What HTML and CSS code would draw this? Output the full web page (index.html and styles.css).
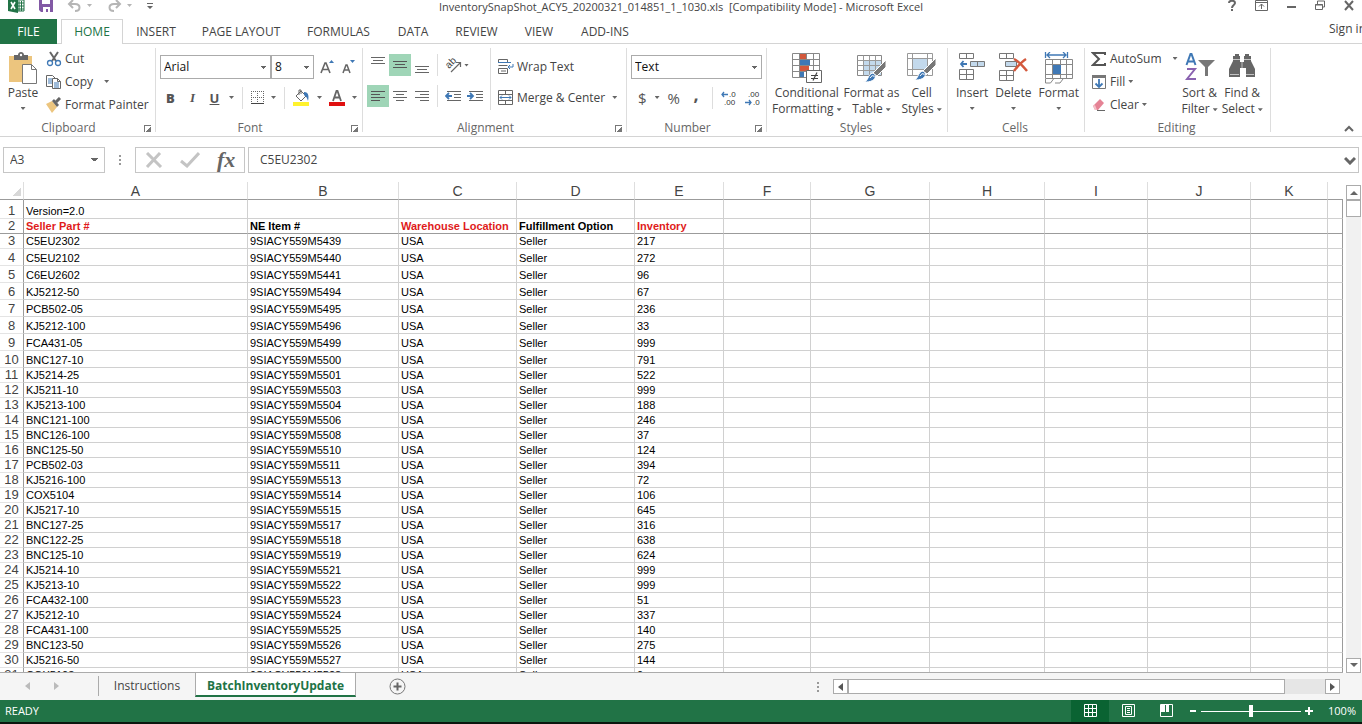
FILE: index.html
```html
<!DOCTYPE html>
<html lang="en">

<head>
    <meta charset="UTF-8">
    <meta name="viewport" content="width=device-width, initial-scale=1.0">
    <title>InventorySnapShot_ACY5_20200321_014851_1_1030.xls - Microsoft Excel</title>
    <link rel="stylesheet" href="styles.css">
</head>

<body>
    <!-- title bar -->
    <header class="titlebar">
        <div class="quick">
            <svg width="17" height="14" viewBox="0 0 17 14"><path d="M9 0h7v11H9z" fill="#fff" stroke="#217346"/><path d="M11 1v10M13.500 1v10M9 3h7M9 6h7M9 9h7" stroke="#217346"/><path d="M0 0h10v13L0 11z" fill="#217346"/><path d="M3 2l4 7M7 2L3 9" stroke="#fff" stroke-width="1.600"/></svg>
            <button class="plain" aria-label="Save"><svg width="14" height="13" viewBox="0 0 14 13"><path d="M0 0h14v12H2l-2-2z" fill="#8259a5"/><path d="M3 0h8v4H3zM4 7h7v5H9V9H7v3H4z" fill="#fff"/></svg></button>
            <button class="plain" aria-label="Undo"><svg width="26" height="13" viewBox="0 0 26 13"><path d="M6 0L2 4l4 4M2 4h6c6 0 6 7 0 7" fill="none" stroke="#b5b5b5" stroke-width="2"/><path d="M20 4h5l-2.500 3z" fill="#b5b5b5"/></svg></button>
            <button class="plain" aria-label="Redo"><svg width="26" height="13" viewBox="0 0 26 13"><path d="M9 0l4 4-4 4M13 4H7C1 4 1 11 7 11" fill="none" stroke="#b5b5b5" stroke-width="2"/><path d="M20 4h5l-2.500 3z" fill="#b5b5b5"/></svg></button>
            <button class="plain" aria-label="Customize toolbar"><svg width="6" height="13" viewBox="0 0 6 13"><path d="M0 3h6v1H0zM0 6h6L3 9z" fill="#666"/></svg></button>
        </div>
        <div class="title">InventorySnapShot_ACY5_20200321_014851_1_1030.xls &nbsp;[Compatibility Mode] - Microsoft Excel</div>
        <div class="window-buttons">
            <button class="plain" aria-label="Help"><svg width="8" height="12" viewBox="0 0 8 12"><path d="M1 3c0-3 6-3 6 0 0 2-3 2-3 5M4 9v2" fill="none" stroke="#666" stroke-width="2"/></svg></button>
            <button class="plain" aria-label="Ribbon options"><svg width="13" height="12" viewBox="0 0 13 12"><path d="M.5.5h12v10H.5zM.5 2.500h12M6.500 9V4M4 6.500L6.500 4 9 6.500" fill="none" stroke="#666"/></svg></button>
            <button class="plain" aria-label="Minimize"><svg width="9" height="12" viewBox="0 0 9 12"><path d="M0 6h9v2H0z" fill="#666"/></svg></button>
            <button class="plain" aria-label="Restore"><svg width="10" height="12" viewBox="0 0 10 12"><path d="M.5 4.500h7v5h-7zM2.500 4V1h7v6h-2M0 5h8" fill="none" stroke="#666"/></svg></button>
            <button class="plain" aria-label="Close"><svg width="10" height="12" viewBox="0 0 10 12"><path d="M1 1l8 9M9 1l-8 9" stroke="#666" stroke-width="2"/></svg></button>
        </div>
    </header>

    <!-- tabs -->
    <nav class="tabs">
        <a href="#" class="tab file">FILE</a>
        <a href="#" class="tab active">HOME</a>
        <a href="#" class="tab insert">INSERT</a>
        <a href="#" class="tab layout">PAGE LAYOUT</a>
        <a href="#" class="tab formulas">FORMULAS</a>
        <a href="#" class="tab data">DATA</a>
        <a href="#" class="tab review">REVIEW</a>
        <a href="#" class="tab view">VIEW</a>
        <a href="#" class="tab addins">ADD-INS</a>
        <a href="#" class="signin">Sign in</a>
    </nav>

    <!-- ribbon -->
    <section class="ribbon">
        <div class="group clipboard">
            <div class="tools">
                <button class="big paste">
                    <svg width="30" height="32" viewBox="0 0 30 32"><path d="M1 4h23v26H1z" fill="#ecc57e"/><path d="M6 3h4c0-4 6-4 6 0h4v5H6z" fill="#666"/><circle cx="13" cy="3" r="1.200" fill="#fff"/><path d="M14.500 12.500h9l5 5v14h-14z" fill="#fff" stroke="#777"/><path d="M23.500 12.500v5h5" fill="none" stroke="#777"/></svg>
                    <span>Paste</span><i class="arrow"></i>
                </button>
                <div class="stack">
                    <button class="item"><svg width="16" height="16" viewBox="0 0 16 16"><path d="M4 1l6 9M12 1L6 10" stroke="#666" stroke-width="2"/><circle cx="4" cy="12" r="2.500" fill="#fff" stroke="#3f78b5" stroke-width="1.300"/><circle cx="12" cy="12" r="2.500" fill="#fff" stroke="#3f78b5" stroke-width="1.300"/></svg>Cut</button>
                    <button class="item"><svg width="16" height="16" viewBox="0 0 16 16"><path d="M.5 1.500h6l3 3v8h-9z" fill="#fff" stroke="#666"/><path d="M2 5h4M2 7h4M2 9h4" stroke="#3f78b5"/><path d="M6.500 4.500h5l3 3v7h-8z" fill="#fff" stroke="#666"/><path d="M11.500 4.500v3h3" fill="none" stroke="#666"/><path d="M8 9h5M8 11h5M8 13h5" stroke="#3f78b5"/></svg>Copy<i class="arrow far"></i></button>
                    <button class="item"><svg width="16" height="16" viewBox="0 0 16 16"><path d="M0 7l6-3 5 6-5 6z" fill="#ecc57e"/><path d="M6 4l2-2 5 6-2 2z" fill="#666"/><path d="M10 5l4-4" stroke="#666" stroke-width="3"/></svg>Format Painter</button>
                </div>
            </div>
            <div class="caption">Clipboard<i class="launch"></i></div>
        </div>

        <div class="group font">
            <div class="line">
                <select class="font-name" aria-label="Font"><option>Arial</option></select><select class="font-size" aria-label="Font size"><option>8</option></select>
                <button class="plain grow" aria-label="Increase font size"><svg width="14" height="16" viewBox="0 0 14 16"><path d="M1 14L5 4h1l4 10M2.500 10.500h6" fill="none" stroke="#666" stroke-width="1.600"/><path d="M9 4l2.500-3L14 4z" fill="#3f78b5"/></svg></button>
                <button class="plain" aria-label="Decrease font size"><svg width="14" height="16" viewBox="0 0 14 16"><path d="M1 14L4 6h1l3 8M2 11h5" fill="none" stroke="#666" stroke-width="1.500"/><path d="M8 1h5l-2.500 3z" fill="#3f78b5"/></svg></button>
            </div>
            <div class="line marks">
                <button class="mark"><b>B</b></button>
                <button class="mark italic">I</button>
                <button class="mark under">U</button><i class="arrow"></i>
                <span class="divider"></span>
                <button class="plain" aria-label="Borders"><svg width="13" height="13" viewBox="0 0 13 13"><path d="M.5 0v12M6.500 0v12M12.500 0v12M0 .5h13M0 6.500h13" stroke="#666" stroke-dasharray="1 1"/><path d="M0 12.500h13" stroke="#444"/></svg></button><i class="arrow"></i>
                <span class="divider"></span>
                <button class="plain" aria-label="Fill color"><svg width="17" height="17" viewBox="0 0 17 17"><path d="M3 7l5-5 5 5-5 5z" fill="#fff" stroke="#666"/><path d="M6 6V1h2v4" fill="none" stroke="#666"/><path d="M11 3c5 0 5 5 4 9-1-4-2-4-4-6z" fill="#3f78b5"/><path d="M0 13h16v4H0z" fill="#fff22d"/></svg></button><i class="arrow"></i>
                <button class="plain" aria-label="Font color"><svg width="16" height="17" viewBox="0 0 16 17"><path d="M4 12L7.500 2h1L12 12M5.500 8.500h5" fill="none" stroke="#666" stroke-width="1.800"/><path d="M0 13h16v4H0z" fill="#e01010"/></svg></button><i class="arrow"></i>
            </div>
            <div class="caption">Font<i class="launch"></i></div>
        </div>

        <div class="group alignment">
            <div class="tools">
                <div class="aligns">
                    <button class="sq" aria-label="Top align"><svg width="14" height="22" viewBox="0 0 14 22"><path d="M0 3.500h14M2 6.500h10M0 9.500h14" stroke="#666"/></svg></button>
                    <button class="sq on" aria-label="Middle align"><svg width="14" height="22" viewBox="0 0 14 22"><path d="M0 7.500h14M2 10.500h10M0 13.500h14" stroke="#555"/></svg></button>
                    <button class="sq" aria-label="Bottom align"><svg width="14" height="22" viewBox="0 0 14 22"><path d="M0 12.500h14M2 15.500h10M0 18.500h14" stroke="#666"/></svg></button>
                    <span class="divider"></span>
                    <button class="plain" aria-label="Orientation"><svg width="20" height="20" viewBox="0 0 20 20"><text font-size="10" transform="translate(6 14) rotate(-45)" fill="#444">ab</text><path d="M8 17l9-9M13 7.500h4.500V12" fill="none" stroke="#666" stroke-width="1.200"/></svg></button><i class="arrow"></i>
                    <button class="sq on" aria-label="Align left"><svg width="14" height="22" viewBox="0 0 14 22"><path d="M0 6.500h14M0 9.500h9M0 12.500h14M0 15.500h9" stroke="#555"/></svg></button>
                    <button class="sq" aria-label="Center"><svg width="14" height="22" viewBox="0 0 14 22"><path d="M0 6.500h14M3 9.500h8M0 12.500h14M3 15.500h8" stroke="#666"/></svg></button>
                    <button class="sq" aria-label="Align right"><svg width="14" height="22" viewBox="0 0 14 22"><path d="M0 6.500h14M5 9.500h9M0 12.500h14M5 15.500h9" stroke="#666"/></svg></button>
                    <span class="divider"></span>
                    <button class="plain" aria-label="Decrease indent"><svg width="16" height="12" viewBox="0 0 16 12"><path d="M2 1.500h14M9 4.500h7M9 7.500h7M2 10.500h14" stroke="#666"/><path d="M7 6H1M4 3L1 6l3 3" fill="none" stroke="#3f78b5" stroke-width="1.800"/></svg></button>
                    <button class="plain" aria-label="Increase indent"><svg width="16" height="12" viewBox="0 0 16 12"><path d="M2 1.500h14M9 4.500h7M9 7.500h7M2 10.500h14" stroke="#666"/><path d="M0 6h6M3 3l3 3-3 3" fill="none" stroke="#3f78b5" stroke-width="1.800"/></svg></button>
                </div>
                <div class="wraps">
                    <button class="item"><svg width="16" height="16" viewBox="0 0 16 16"><path d="M.5.5h9v3h-9zM.5 9.500h9v5h-9zM.5 6.500h9M3 12h5" fill="none" stroke="#666"/><path d="M0 3.500h13M15 5v3H10M12 6l-2 2 2 2" fill="none" stroke="#3f78b5"/></svg>Wrap Text</button>
                    <button class="item"><svg width="16" height="16" viewBox="0 0 16 16"><path d="M.5.5h14v14H.5zM.5 4.500h14M.5 10.500h14M7.500.5v4M7.500 10.500v4" fill="none" stroke="#666"/><path d="M2 7.500h11M4 5.500l-2 2 2 2M11 5.500l2 2-2 2" fill="none" stroke="#3f78b5"/></svg>Merge &amp; Center<i class="arrow wide"></i></button>
                </div>
            </div>
            <div class="caption">Alignment<i class="launch"></i></div>
        </div>

        <div class="group number">
            <div class="line"><select class="format" aria-label="Number format"><option>Text</option></select></div>
            <div class="line signs">
                <button class="sign">$</button><i class="arrow"></i>
                <button class="sign">%</button>
                <button class="sign comma">,</button>
                <span class="divider"></span>
                <button class="plain" aria-label="Increase decimal"><svg width="16" height="18" viewBox="0 0 16 18"><path d="M7 5.500H1M3 3L1 5.500 3 8" fill="none" stroke="#3f78b5" stroke-width="1.300"/><text x="8" y="8" font-size="8" fill="#333">.0</text><text x="3" y="16" font-size="8" fill="#333">.00</text></svg></button>
                <button class="plain" aria-label="Decrease decimal"><svg width="16" height="18" viewBox="0 0 16 18"><path d="M0 13.500h6M4 11l2 2.500L4 16" fill="none" stroke="#3f78b5" stroke-width="1.300"/><text x="3" y="8" font-size="8" fill="#333">.00</text><text x="8" y="16" font-size="8" fill="#333">.0</text></svg></button>
            </div>
            <div class="caption">Number<i class="launch"></i></div>
        </div>

        <div class="group styles">
            <div class="tools">
                <button class="big">
                    <svg width="32" height="32" viewBox="0 0 32 32"><path d="M1.500 1.500h27v24h-27zM1.500 7.500h27M1.500 13.500h27M1.500 19.500h27M8.500 1.500v24M15.500 1.500v24M22.500 1.500v24" fill="#fff" stroke="#888"/><path d="M9 2h6v5H9zM9 14h9v5H9z" fill="#d3583c"/><path d="M9 8h10v5H9zM9 20h4v5H9z" fill="#3f78b5"/><path d="M15.500 18.500h15v12h-15z" fill="#fff" stroke="#666"/><path d="M20 23.500h7M20 26.500h7M26 20.500l-4 8" stroke="#444" stroke-width="1.200"/></svg>
                    <span>Conditional</span><span>Formatting<i class="arrow in"></i></span>
                </button>
                <button class="big">
                    <svg width="32" height="32" viewBox="0 0 32 32"><path d="M1.500 3.500h24v20h-24z" fill="#fff" stroke="#888"/><path d="M8 9h17v14H8z" fill="#c3d9ec"/><path d="M1.500 8.500h24M1.500 13.500h24M1.500 18.500h24M7.500 3.500v20M13.500 3.500v20M19.500 3.500v20" stroke="#999"/><path d="M30 8v7l-9 9-4-3z" fill="#777" stroke="#fff"/><path d="M7 30c6 0 4-8 10-9 5 3 2 10-10 9z" fill="#3f78b5" stroke="#fff"/><path d="M14 26c2-3 4-3 4-1" fill="none" stroke="#fff"/></svg>
                    <span>Format as</span><span>Table<i class="arrow in"></i></span>
                </button>
                <button class="big">
                    <svg width="32" height="32" viewBox="0 0 32 32"><path d="M1.500 1.500h25v22h-25zM1.500 6.500h25M1.500 17.500h25M6.500 1.500v22M21.500 1.500v22" fill="#fff" stroke="#999"/><path d="M7 7h14v10H7z" fill="#c3d9ec"/><path d="M30 6v7l-9 9-4-3z" fill="#777" stroke="#fff"/><path d="M7 28c6 0 4-8 10-9 5 3 2 10-10 9z" fill="#3f78b5" stroke="#fff"/><path d="M14 24c2-3 4-3 4-1" fill="none" stroke="#fff"/></svg>
                    <span>Cell</span><span>Styles<i class="arrow in"></i></span>
                </button>
            </div>
            <div class="caption">Styles</div>
        </div>

        <div class="group cells">
            <div class="tools">
                <button class="big">
                    <svg width="28" height="32" viewBox="0 0 28 32"><path d="M1.500 1.500h14v5h-14zM8.500 1.500v5M1.500 17.500h14v10h-14zM1.500 22.500h14M8.500 17.500v10" fill="#fff" stroke="#777"/><path d="M12.500 9.500h14v5h-14zM19.500 9.500v5" fill="#c3d9ec" stroke="#777"/><path d="M9 12H3M5.500 9L3 12l2.500 3" fill="none" stroke="#3f78b5" stroke-width="1.800"/></svg>
                    <span>Insert</span><i class="arrow"></i>
                </button>
                <button class="big">
                    <svg width="30" height="32" viewBox="0 0 30 32"><path d="M1.500 1.500h14v5h-14zM8.500 1.500v5M1.500 18.500h14v10h-14zM1.500 23.500h14M8.500 18.500v10" fill="#fff" stroke="#777"/><path d="M7.500 9.500h11v5h-11z" fill="#c3d9ec" stroke="#777"/><path d="M16 7c4 2 9 7 13 12M28 7c-5 3-8 7-12 12" fill="none" stroke="#d3583c" stroke-width="2.500"/></svg>
                    <span>Delete</span><i class="arrow"></i>
                </button>
                <button class="big">
                    <svg width="30" height="32" viewBox="0 0 30 32"><path d="M1.500 0v6M23.500 0v6M3 3h19M6 0L3 3l3 3M19 0l3 3-3 3" fill="none" stroke="#3f78b5" stroke-width="1.300"/><path d="M1.500 7.500h27v19h-27zM1.500 12.500h27M1.500 22.500h27M8.500 7.500v19M16.500 7.500v19M22.500 7.500v19" fill="#fff" stroke="#888"/><path d="M9 13h8v9H9z" fill="#3f78b5"/><path d="M1.500 27v4h5l3-4M11 31h5l3-4" fill="none" stroke="#888"/></svg>
                    <span>Format</span><i class="arrow"></i>
                </button>
            </div>
            <div class="caption">Cells</div>
        </div>

        <div class="group editing">
            <div class="tools">
                <div class="stack">
                    <button class="item"><svg width="16" height="16" viewBox="0 0 16 16"><path d="M14 4V2H2l6 6-6 6h12v-2" fill="none" stroke="#555" stroke-width="2"/></svg>AutoSum<i class="arrow far"></i></button>
                    <button class="item"><svg width="16" height="16" viewBox="0 0 16 16"><path d="M1.500 1.500h13v13h-13z" fill="#fff" stroke="#777"/><path d="M1 1h14v3H1z" fill="#777"/><path d="M8 5v8M4.500 9.500L8 13l3.500-3.500" fill="none" stroke="#3f78b5" stroke-width="1.800"/></svg>Fill<i class="arrow"></i></button>
                    <button class="item"><svg width="16" height="16" viewBox="0 0 16 16"><path d="M2 9l7-7 4 4-6 7H4z" fill="#e58395"/><path d="M2 9l2 4h2L4 8z" fill="#f5c1c9"/><path d="M6 13.500h8" stroke="#666"/></svg>Clear<i class="arrow"></i></button>
                </div>
                <button class="big sort">
                    <svg width="30" height="32" viewBox="0 0 30 32"><path d="M1.500 13L5.500 2h1l4 11M3 9.500h6.500" fill="none" stroke="#3f78b5" stroke-width="2"/><path d="M2 17h8L2 27h9" fill="none" stroke="#8a62b0" stroke-width="2"/><path d="M13 8h17l-7 7v9h-3v-9z" fill="#777"/></svg>
                    <span>Sort &amp;</span><span>Filter<i class="arrow in"></i></span>
                </button>
                <button class="big find">
                    <svg width="28" height="32" viewBox="0 0 28 32"><path d="M5 4h2V2h4v2h1v6h4V4h1V2h4v2h2v5l4 8v8h-9v-9h-6v9H1v-8l4-8z" fill="#666"/><path d="M5 7.500h7M16 7.500h7M2 22.500h9M17 22.500h9M14 10v7" stroke="#fff" opacity=".6"/></svg>
                    <span>Find &amp;</span><span>Select<i class="arrow in"></i></span>
                </button>
            </div>
            <div class="caption">Editing</div>
        </div>
        <button class="plain collapse" aria-label="Collapse ribbon"><svg width="10" height="7" viewBox="0 0 10 7"><path d="M1 6l4-4 4 4" fill="none" stroke="#666" stroke-width="2"/></svg></button>
    </section>

    <!-- formula bar -->
    <section class="formula-bar">
        <select class="name-box" aria-label="Name box"><option>A3</option></select>
        <span class="dots"></span>
        <div class="fx">
            <button class="plain" aria-label="Cancel"><svg width="18" height="16" viewBox="0 0 18 16"><path d="M2 1l14 14M15 1L2 15" stroke="#c4c4c4" stroke-width="3"/></svg></button>
            <button class="plain" aria-label="Enter"><svg width="20" height="16" viewBox="0 0 20 16"><path d="M1 9l6 5L19 1" fill="none" stroke="#c4c4c4" stroke-width="3"/></svg></button>
            <button class="plain fx-button">fx</button>
        </div>
        <div class="formula">
            <input type="text" value="C5EU2302" aria-label="Formula">
            <svg width="12" height="9" viewBox="0 0 12 9"><path d="M1 2l5 5 5-5" fill="none" stroke="#666" stroke-width="3"/></svg>
        </div>
    </section>

    <!-- sheet -->
    <main class="sheet">
        <div class="grid">
            <table>
                <colgroup>
                    <col class="c-num"><col class="c-a"><col class="c-b"><col class="c-c"><col class="c-c"><col class="c-e"><col class="c-f"><col class="c-g"><col class="c-h"><col class="c-i"><col class="c-i"><col class="c-k"><col>
                </colgroup>
                <thead>
                    <tr><th class="corner"></th><th>A</th><th>B</th><th>C</th><th>D</th><th>E</th><th>F</th><th>G</th><th>H</th><th>I</th><th>J</th><th>K</th><th></th></tr>
                </thead>
                <tbody id="rows"></tbody>
            </table>
        </div>
        <div class="vscroll">
            <button aria-label="Scroll up"><svg width="8" height="5" viewBox="0 0 8 5"><path d="M0 5l4-4 4 4z" fill="#666"/></svg></button>
            <span class="thumb"></span>
            <button class="down" aria-label="Scroll down"><svg width="8" height="5" viewBox="0 0 8 5"><path d="M0 0l4 4 4-4z" fill="#666"/></svg></button>
        </div>
    </main>

    <!-- sheet tabs -->
    <section class="sheet-tabs">
        <div class="moves">
            <button class="plain" aria-label="Previous sheet"><svg width="5" height="8" viewBox="0 0 5 8"><path d="M5 0v8L0 4z" fill="#bbb"/></svg></button>
            <button class="plain" aria-label="Next sheet"><svg width="5" height="8" viewBox="0 0 5 8"><path d="M0 0v8l5-4z" fill="#bbb"/></svg></button>
        </div>
        <a href="#" class="sheet-tab">Instructions</a>
        <a href="#" class="sheet-tab current">BatchInventoryUpdate</a>
        <button class="plain add" aria-label="New sheet"><svg width="17" height="17" viewBox="0 0 17 17"><circle cx="8.500" cy="8.500" r="7.500" fill="none" stroke="#777"/><path d="M8.500 4.500v8M4.500 8.500h8" stroke="#666" stroke-width="2"/></svg></button>
        <span class="dots"></span>
        <div class="hscroll">
            <button aria-label="Scroll left"><svg width="5" height="8" viewBox="0 0 5 8"><path d="M5 0v8L0 4z" fill="#555"/></svg></button>
            <span class="thumb"></span>
            <button class="right" aria-label="Scroll right"><svg width="5" height="8" viewBox="0 0 5 8"><path d="M0 0v8l5-4z" fill="#555"/></svg></button>
        </div>
    </section>

    <!-- status bar -->
    <footer class="status">
        <span class="ready">READY</span>
        <button class="view-button on" aria-label="Normal"><svg width="13" height="14" viewBox="0 0 13 14"><path d="M.5.5h12v12H.5zM.5 4.500h12M.5 8.500h12M4.500.5v12M8.500.5v12" fill="none" stroke="#fff"/></svg></button>
        <button class="view-button" aria-label="Page layout"><svg width="13" height="14" viewBox="0 0 13 14"><path d="M.5.5h12v12H.5zM3.500 2.500h6v8h-6zM5 4.500h3M5 6.500h3M5 8.500h3" fill="none" stroke="#fff"/></svg></button>
        <button class="view-button" aria-label="Page break"><svg width="13" height="14" viewBox="0 0 13 14"><path d="M.5.5h12v12H.5z" fill="none" stroke="#fff"/><path d="M1 1h4v7H1zM6 1h3v7H6z" fill="#fff"/></svg></button>
        <button class="zoom-button" aria-label="Zoom out"><svg width="8" height="8" viewBox="0 0 8 8"><path d="M1 3h6v2H1z" fill="#fff"/></svg></button>
        <input type="range" class="zoom" min="0" max="200" value="100" aria-label="Zoom">
        <button class="zoom-button" aria-label="Zoom in"><svg width="8" height="8" viewBox="0 0 8 8"><path d="M0 3h8v2H0zM3 0h2v8H3z" fill="#fff"/></svg></button>
        <span class="percent">100%</span>
    </footer>

    <script src="script.js"></script>
</body>

</html>
```
FILE: styles.css
```css
* {
    margin: 0;
    padding: 0;
    box-sizing: border-box;
}

body {
    height: 100vh;
    display: flex;
    flex-direction: column;
    overflow: hidden;
    background-color: #ffffff;
    border-bottom: 2px solid #0a160e;
    font-family: "Open Sans", "Noto Sans", sans-serif;
    font-size: 12px;
    line-height: 16px;
    color: #444;
}

button,
select,
input {
    font: inherit;
    color: inherit;
    background: none;
    border: none;
    border-radius: 0;
}

a {
    color: inherit;
    text-decoration: none;
}

svg {
    display: block;
    flex: none;
}

svg text {
    font-family: "Liberation Sans", sans-serif;
}

.plain {
    display: flex;
    flex: none;
}

/* Title bar */
.titlebar {
    height: 19px;
    display: grid;
    grid-template-columns: 1fr auto 1fr;
    align-items: start;
}

.quick {
    display: flex;
    gap: 14px;
    padding-left: 8px;
}

.title {
    font-size: 11px;
    line-height: 14px;
    white-space: pre;
}

.window-buttons {
    display: flex;
    justify-content: flex-end;
    gap: 19px;
    padding-right: 8px;
}

/* Ribbon tabs */
.tabs {
    height: 25px;
    display: flex;
    border-bottom: 1px solid #d4d4d4;
}

.tab {
    height: 25px;
    line-height: 25px;
    text-align: center;
}

.file {
    width: 57px;
    background-color: #217346;
    color: #ffffff;
    margin-right: 4px;
}

.active {
    width: 62px;
    background-color: #ffffff;
    border: 1px solid #d4d4d4;
    border-bottom: none;
    line-height: 24px;
    color: #217346;
}

.insert { width: 66px; }
.layout { width: 104px; }
.formulas { width: 91px; }
.data { width: 58px; }
.review { width: 69px; }
.view { width: 56px; }
.addins { width: 76px; }

.signin {
    margin-left: auto;
    margin-right: -4px;
    line-height: 20px;
    white-space: nowrap;
}

/* Ribbon */
.ribbon {
    height: 93px;
    display: flex;
    padding-top: 4px;
    border-bottom: 1px solid #d4d4d4;
}

.group {
    height: 84px;
    display: flex;
    flex-direction: column;
    flex: none;
    border-right: 1px solid #dddddd;
}

.clipboard { width: 156px; }
.font { width: 207px; }
.alignment { width: 264px; }
.number { width: 140px; }
.styles { width: 181px; }
.cells { width: 137px; }
.editing { width: 186px; }

.caption {
    position: relative;
    margin-top: auto;
    text-align: center;
    padding-right: 18px;
    line-height: 8px;
    color: #666;
}

.styles .caption,
.cells .caption,
.editing .caption {
    padding-right: 2px;
}

.launch {
    position: absolute;
    right: 4px;
    top: 1px;
    width: 7px;
    height: 7px;
    border-left: 1px solid #777;
    border-top: 1px solid #777;
    background: linear-gradient(135deg, transparent 55%, #777 55%);
}

.arrow {
    flex: none;
    display: inline-block;
    width: 5px;
    height: 3px;
    background-color: #666;
    clip-path: polygon(0 0, 100% 0, 50% 100%);
}

.arrow.far { margin-left: 8px; }
.arrow.wide { margin-left: 4px; }

.arrow.in {
    margin-left: 3px;
    vertical-align: middle;
}

.tools {
    height: 76px;
    display: flex;
    align-items: flex-start;
}

.big {
    display: flex;
    flex-direction: column;
    align-items: center;
    padding-top: 4px;
    white-space: nowrap;
}

.big .arrow:not(.in) {
    margin-top: 6px;
}

.big svg {
    margin-bottom: 1px;
}

.paste {
    width: 46px;
}

.stack {
    display: flex;
    flex-direction: column;
}

.item {
    height: 23px;
    display: flex;
    align-items: center;
    gap: 3px;
    padding-bottom: 2px;
    white-space: nowrap;
}

.line {
    height: 31px;
    display: flex;
    align-items: center;
    padding: 6px 0 0 4px;
}

.line select {
    height: 24px;
    border: 1px solid #ababab;
    padding: 0 3px;
    color: #111;
    appearance: none;
}

select {
    background-image: linear-gradient(#666, #666), linear-gradient(#666, #666), linear-gradient(#666, #666);
    background-size: 5px 1px, 3px 1px, 1px 1px;
    background-position: right 4px top 10px, right 5px top 11px, right 6px top 12px;
    background-repeat: no-repeat;
}

.font-name { width: 111px; }
.font-size { width: 43px; }
.format { width: 131px; }

.grow {
    margin: 0 8px 0 6px;
}

.line.marks {
    gap: 7px;
    padding-left: 7px;
}

.mark {
    flex: none;
    width: 15px;
    font-size: 13px;
    font-weight: 700;
    color: #555;
}

.italic {
    font-family: "Liberation Serif", serif;
    font-style: italic;
}

.under {
    text-decoration: underline;
}

.divider {
    flex: none;
    width: 1px;
    height: 22px;
    background-color: #dddddd;
}

.marks .divider {
    margin: 0 1px;
}

.aligns {
    width: 127px;
    display: grid;
    grid-template-columns: 22px 22px 22px 9px 22px 22px;
    align-items: center;
    row-gap: 9px;
    padding: 6px 0 0 4px;
}

.aligns .divider {
    justify-self: center;
}

.aligns .plain {
    justify-content: center;
}

.sq {
    width: 22px;
    height: 22px;
    display: flex;
    align-items: center;
    justify-content: center;
}

.sq.on {
    background-color: #9fd5b7;
}

.wraps {
    display: flex;
    flex-direction: column;
    gap: 8px;
    padding: 8px 0 0 7px;
    border-left: 1px solid #dddddd;
}

.line.signs {
    gap: 8px;
    padding-left: 11px;
}

.sign {
    flex: none;
    font-size: 15px;
    color: #555;
}

.comma {
    width: 16px;
    padding-bottom: 8px;
    font-size: 18px;
    font-weight: 700;
}

.styles .tools {
    gap: 2px;
    padding-left: 5px;
}

.cells .tools {
    gap: 7px;
    padding-left: 8px;
}

.editing .tools {
    gap: 4px;
    padding-left: 6px;
}

.collapse {
    margin: 77px 8px 0 auto;
    align-self: flex-start;
}

/* Formula bar */
.formula-bar {
    display: flex;
    align-items: center;
    padding: 10px 3px 9px;
}

.name-box {
    width: 102px;
    height: 26px;
    border: 1px solid #c6c6c6;
    padding-left: 6px;
    appearance: none;
    background-size: 7px 1px, 5px 1px, 3px 1px;
    background-position: right 6px top 10px, right 7px top 11px, right 8px top 12px;
}

.dots {
    width: 2px;
    height: 10px;
    margin: 0 14px;
    background: repeating-linear-gradient(#999 0 2px, transparent 2px 4px);
}

.fx {
    width: 110px;
    height: 26px;
    display: flex;
    align-items: center;
    gap: 17px;
    padding-left: 9px;
    border: 1px solid #c6c6c6;
}

.fx-button {
    font-family: "Liberation Serif", serif;
    font-style: italic;
    font-weight: 700;
    font-size: 22px;
    line-height: 24px;
    color: #666;
}

.formula {
    flex: 1;
    height: 26px;
    display: flex;
    align-items: center;
    margin-left: 3px;
    padding: 0 2px 0 11px;
    border: 1px solid #c6c6c6;
}

.formula input {
    flex: 1;
}

/* Sheet */
.sheet {
    flex: 1;
    min-height: 0;
    display: flex;
}

.grid {
    flex: 1;
    min-width: 0;
    overflow: hidden;
    border-bottom: 1px solid #ababab;
}

table {
    width: 100%;
    table-layout: fixed;
    border-collapse: separate;
    border-spacing: 0;
    font-family: "Liberation Sans", Arial, sans-serif;
}

.c-num { width: 24px; }
.c-a { width: 224px; }
.c-b { width: 151px; }
.c-c { width: 118px; }
.c-e { width: 89px; }
.c-f { width: 87px; }
.c-g { width: 119px; }
.c-h { width: 115px; }
.c-i { width: 103px; }
.c-k { width: 77px; }

thead th {
    height: 18px;
    padding-top: 2px;
    border-right: 1px solid #dedede;
    border-bottom: 1px solid #9b9b9b;
    font-size: 14px;
    line-height: 15px;
    font-weight: 400;
}

thead th:last-child {
    border-right: none;
}

.corner {
    background: linear-gradient(135deg, transparent 50%, #d8d8d8 50%) no-repeat 12px 5px / 9px 9px;
}

tbody th,
td {
    height: 15px;
    border-right: 1px solid #d0d0d0;
    border-bottom: 1px solid #d0d0d0;
    vertical-align: bottom;
    white-space: nowrap;
}

tbody th {
    border-right-color: #9b9b9b;
    border-bottom-color: #e4e4e4;
    font-size: 13px;
    line-height: 14px;
    font-weight: 400;
}

td {
    padding-left: 2px;
    font-size: 11px;
    line-height: 13px;
    color: #000;
}

td:last-child {
    border-right-color: #9b9b9b;
}

.first > * { height: 19px; }
.tall > * { height: 17px; }

.names td {
    font-weight: 700;
}

.names > * {
    border-bottom-color: #9b9b9b;
}

.names .required {
    color: #e01b1b;
}

.vscroll {
    width: 15px;
    display: flex;
    flex-direction: column;
    margin: 3px 1px 0 3px;
    background-color: #f1f1f1;
}

.vscroll button,
.hscroll button {
    width: 15px;
    height: 15px;
    display: flex;
    align-items: center;
    justify-content: center;
    background-color: #ffffff;
    border: 1px solid #ababab;
}

.vscroll .thumb {
    height: 17px;
    background-color: #ffffff;
    border: 1px solid #ababab;
}

.vscroll .down {
    margin-top: auto;
}

/* Sheet tabs */
.sheet-tabs {
    height: 27px;
    display: flex;
    background-color: #f5f5f5;
}

.moves {
    width: 99px;
    height: 20px;
    display: flex;
    align-items: center;
    gap: 24px;
    margin-top: 3px;
    padding-left: 25px;
    border-right: 1px solid #ababab;
}

.sheet-tab {
    width: 96px;
    height: 24px;
    line-height: 25px;
    text-align: center;
}

.current {
    width: 161px;
    border: 1px solid #ababab;
    border-top: none;
    border-bottom: 2px solid #217346;
    background-color: #ffffff;
    color: #217346;
    font-weight: 700;
}

.add {
    margin: 5px auto 0 33px;
}

.sheet-tabs .dots {
    margin-top: 9px;
}

.hscroll {
    width: 507px;
    height: 15px;
    display: flex;
    margin: 6px 22px 0 0;
    background-color: #e6e6e6;
}

.hscroll .thumb {
    width: 437px;
    background-color: #ffffff;
    border: 1px solid #ababab;
}

.hscroll .right {
    margin-left: auto;
}

/* Status bar */
.status {
    height: 22px;
    display: flex;
    align-items: center;
    padding: 0 6px 0 5px;
    background-color: #217346;
    color: #ffffff;
    font-size: 11px;
}

.ready {
    margin-right: auto;
}

.view-button {
    width: 38px;
    height: 22px;
    display: flex;
    align-items: center;
    justify-content: center;
}

.view-button.on {
    background-color: #0a6332;
}

.zoom-button {
    display: flex;
}

.view-button + .zoom-button {
    margin-left: 4px;
}

.zoom {
    width: 100px;
    height: 12px;
    margin: 0 4px;
    appearance: none;
    background: linear-gradient(#fff, #fff) no-repeat 0 6px / 100% 1px;
}

.zoom::-webkit-slider-thumb {
    appearance: none;
    width: 4px;
    height: 12px;
    background-color: #ffffff;
}

.percent {
    width: 43px;
    text-align: right;
}
```
FILE: script.js
```javascript
const parts = [
    ['C5EU2302', '5439', 217], ['C5EU2102', '5440', 272], ['C6EU2602', '5441', 96],
    ['KJ5212-50', '5494', 67], ['PCB502-05', '5495', 236], ['KJ5212-100', '5496', 33],
    ['FCA431-05', '5499', 999], ['BNC127-10', '5500', 791], ['KJ5214-25', '5501', 522],
    ['KJ5211-10', '5503', 999], ['KJ5213-100', '5504', 188], ['BNC121-100', '5506', 246],
    ['BNC126-100', '5508', 37], ['BNC125-50', '5510', 124], ['PCB502-03', '5511', 394],
    ['KJ5216-100', '5513', 72], ['COX5104', '5514', 106], ['KJ5217-10', '5515', 645],
    ['BNC127-25', '5517', 316], ['BNC122-25', '5518', 638], ['BNC125-10', '5519', 624],
    ['KJ5214-10', '5521', 999], ['KJ5213-10', '5522', 999], ['FCA432-100', '5523', 51],
    ['KJ5212-10', '5524', 337], ['FCA431-100', '5525', 140], ['BNC123-50', '5526', 275],
    ['KJ5216-50', '5527', 144], ['COX5103', '5528', 0]
];

const tbody = document.getElementById('rows');

function addRow(number, cells, className) {
    const tr = document.createElement('tr');
    tr.className = className;
    const th = document.createElement('th');
    th.textContent = number;
    tr.appendChild(th);
    for (let i = 0; i < 12; i++) {
        const td = document.createElement('td');
        td.textContent = cells[i] === undefined ? '' : cells[i];
        // required columns are shown in red
        if (number === 2 && (i === 0 || i === 2 || i === 4)) {
            td.className = 'required';
        }
        tr.appendChild(td);
    }
    tbody.appendChild(tr);
}

addRow(1, ['Version=2.0'], 'first');
addRow(2, ['Seller Part #', 'NE Item #', 'Warehouse Location', 'Fulfillment Option', 'Inventory'], 'names');

parts.forEach(function (part, index) {
    const number = index + 3;
    const tall = number >= 4 && number <= 10;
    addRow(number, [part[0], '9SIACY559M' + part[1], 'USA', 'Seller', part[2]], tall ? 'tall' : '');
});
```
